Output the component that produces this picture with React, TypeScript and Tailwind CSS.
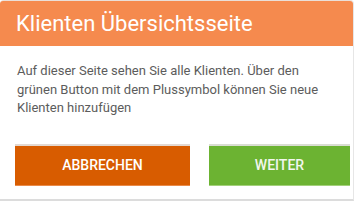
import React from "react";

export default function App() {
  return (
    <div className="w-[356px] h-[202px] bg-white overflow-hidden" style={{ fontFamily: "Roboto, 'Liberation Sans', sans-serif" }}>
      <div className="w-[354px] h-[201px] border-t border-[#eadfd8] border-r border-r-[#e6e6e6] border-b-2 border-b-[#dcdcdc] rounded-t-[4px] flex flex-col">
        <div className="h-[45px] bg-[#f58a4e] rounded-t-[3px] flex items-center pl-[16px]">
          <span className="text-white text-[22px] leading-none">Klienten Übersichtsseite</span>
        </div>
        <div className="pt-[16px] pl-[17px] pr-[16px]">
          <p className="text-[#5c5c5c] text-[13px] leading-[18.5px]">
            Auf dieser Seite sehen Sie alle Klienten. Über den grünen Button mit dem Plussymbol können Sie neue Klienten hinzufügen
          </p>
        </div>
        <div className="flex gap-[19px] pl-[15px] mt-[26px]">
          <button className="w-[175px] h-[42px] bg-[#d85c00] border-t-2 border-t-[#e3d9d2] border-b border-b-[#ea8a48] text-white text-[14px] font-medium flex items-center justify-center">
            ABBRECHEN
          </button>
          <button className="w-[141px] h-[42px] bg-[#6cb332] border-t-2 border-t-[#d9ddd3] border-b border-b-[#a3d07a] text-[#f2f7ee] text-[14px] font-medium flex items-center justify-center">
            WEITER
          </button>
        </div>
      </div>
    </div>
  );
}
